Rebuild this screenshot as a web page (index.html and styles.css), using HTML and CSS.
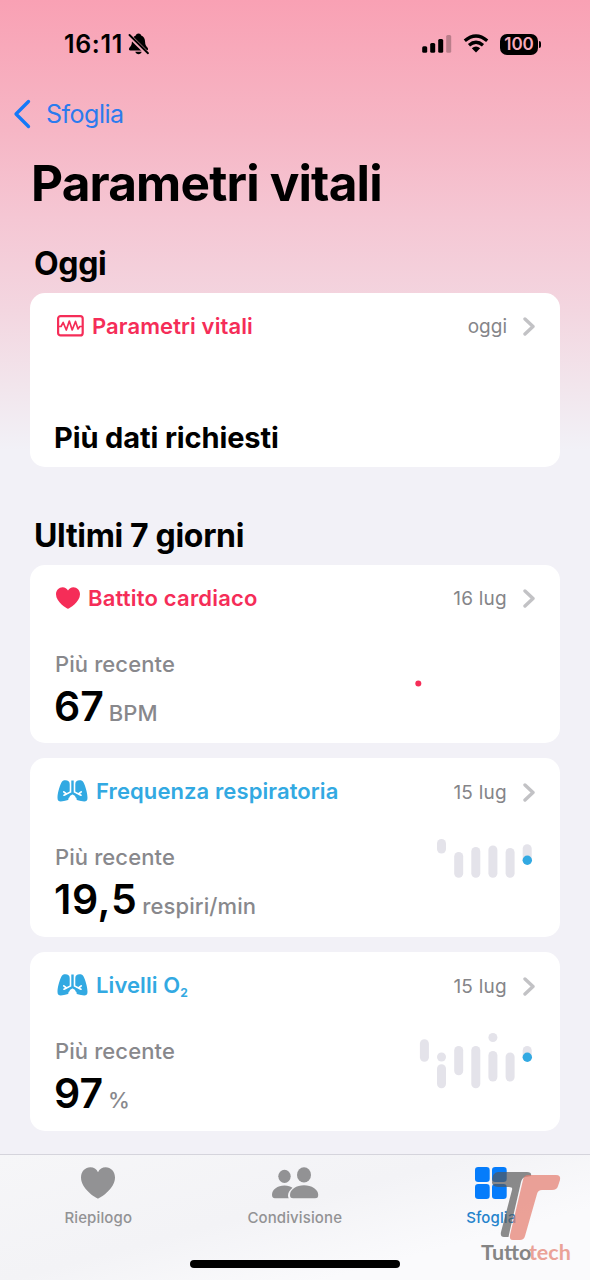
FILE: index.html
```html
<!DOCTYPE html>
<html lang="it">
<head>
<meta charset="utf-8">
<title>Parametri vitali</title>
<link rel="stylesheet" href="styles.css">
</head>
<body>
<svg class="defs" width="0" height="0">
  <symbol id="heart" viewBox="0 0 34 32"><path d="M17 31.500C15.500 31.500 0 22 0 10.500C0 4.500 4.300 0.300 9.300 0.300C12.800 0.300 15.500 2.200 17 5.200C18.500 2.200 21.200 0.300 24.700 0.300C29.700 0.300 34 4.500 34 10.500C34 22 18.500 31.500 17 31.500Z"/></symbol>
  <symbol id="chevron" viewBox="0 0 12 19"><path d="M2 2L10 9.500L2 17" fill="none" stroke="currentColor" stroke-width="3.400" stroke-linecap="round" stroke-linejoin="round"/></symbol>
  <symbol id="lungs" viewBox="0 0 31 22">
    <path d="M8.500 0.300C11 0.300 12.700 1.500 12.700 4V17C12.700 20 10 20.500 7 21C3.500 21.600 0.500 22 0.500 18C0.500 13 2.500 6.500 4.300 2.700C5.200 0.900 6.500 0.300 8.500 0.300Z"/>
    <path d="M22.500 0.300C20 0.300 18.300 1.500 18.300 4V17C18.300 20 21 20.500 24 21C27.500 21.600 30.500 22 30.500 18C30.500 13 28.500 6.500 26.700 2.700C25.800 0.900 24.500 0.300 22.500 0.300Z"/>
    <path d="M15.500 15.500L11.500 18V22H19.500V18Z" fill="#fff"/>
    <path d="M13.200 12.300L7 15.200M9.500 14L6.800 11.800M17.800 12.300L24 15.200M21.500 14L24.200 11.800" fill="none" stroke="#fff" stroke-width="1.700" stroke-linecap="round"/>
    <path d="M15.500 0.500V13.500M15.500 13L11 15.800M15.500 13L20 15.800" fill="none" stroke="currentColor" stroke-width="2.400"/>
  </symbol>
</svg>
<main class="screen">
  <header class="status">
    <div class="clock"><span class="time">16:11</span>
      <svg class="bell" width="22" height="22" viewBox="0 0 22 22"><path d="M10.500 0.500C12.300 0.500 13 1.700 13.200 2.500C16 3.500 17 6 17.100 9C17.200 12 18 13 19.600 14.800C20.500 16 20.200 17.500 18.500 17.500H2.500C0.800 17.500 0.500 16 1.400 14.800C3 13 3.800 12 3.900 9C4 6 5 3.500 7.800 2.500C8 1.700 8.700 0.500 10.500 0.500ZM7.300 18.800H13.700C13 22 8 22 7.300 18.800Z"/><path d="M0.500 2L20 21.200" stroke="#f7aabb" stroke-width="4.400"/><path d="M1.500 2L20 20.200" stroke="#000" stroke-width="1.900" stroke-linecap="round"/></svg>
    </div>
    <div class="indicators">
      <svg width="30" height="20" viewBox="0 0 30 20"><rect x="0.200" y="12.300" width="5" height="6.500" rx="1.500"/><rect x="8.200" y="9" width="5" height="9.800" rx="1.500"/><rect x="16.200" y="5" width="5" height="13.800" rx="1.500"/><rect x="24.200" y="1" width="5" height="17.800" rx="1.500" opacity=".25"/></svg>
      <svg class="wifi" width="26" height="20" viewBox="0 0 26 20"><path d="M1.800 6.800Q13 -2.800 24.200 6.800M6 11.200Q13 5.200 20 11.200" fill="none" stroke="#000" stroke-width="3.300"/><path d="M8.800 14.200Q13 10.800 17.200 14.200L13 18.600Z"/></svg>
      <span class="battery">100</span><span class="battery-cap"></span>
    </div>
  </header>
  <nav class="back"><svg width="18" height="30" viewBox="0 0 18 30"><path d="M15.500 2.500L3 15L15.500 27.500" fill="none" stroke="#1479f8" stroke-width="3.300" stroke-linecap="round" stroke-linejoin="round"/></svg><span class="back-label">Sfoglia</span></nav>
  <h1 class="title">Parametri vitali</h1>
  <h2 class="heading today">Oggi</h2>
  <section class="card card-short">
    <div class="card-head"><svg class="red" width="27" height="22" viewBox="0 0 27 22"><rect x="1.100" y="1.100" width="24.600" height="19.300" rx="2.500" fill="none" stroke="currentColor" stroke-width="2.200"/><path d="M2 11.500H4L6.200 7.500L9.300 15L12.300 6L15.200 15L18.500 6.500L21 14L22.800 11.500H25" fill="none" stroke="currentColor" stroke-width="1.700" stroke-linejoin="round"/></svg><span class="label red l-vital">Parametri vitali</span><span class="date">oggi</span><svg class="chev" width="12" height="19"><use href="#chevron"/></svg></div>
    <p class="message">Più dati richiesti</p>
  </section>
  <h2 class="heading week">Ultimi 7 giorni</h2>
  <div class="cards">
    <section class="card">
      <div class="card-head"><svg class="red heart" width="24" height="22" viewBox="0 0 34 32" preserveAspectRatio="none"><use href="#heart" width="34" height="32"/></svg><span class="label red l-heart">Battito cardiaco</span><span class="date dated">16 lug</span><svg class="chev" width="12" height="19"><use href="#chevron"/></svg></div>
      <div class="card-body"><div><p class="recent">Più recente</p><p class="reading"><span class="value">67</span><span class="unit u-bpm">BPM</span></p></div>
      <svg class="chart" width="120" height="84"><circle class="dot-red" cx="3.300" cy="50.500" r="3"/></svg></div>
    </section>
    <section class="card">
      <div class="card-head"><svg class="blue" width="31" height="22"><use href="#lungs"/></svg><span class="label blue l-resp">Frequenza respiratoria</span><span class="date dated">15 lug</span><svg class="chev" width="12" height="19"><use href="#chevron"/></svg></div>
      <div class="card-body"><div><p class="recent">Più recente</p><p class="reading"><span class="value v-resp">19,5</span><span class="unit u-resp">respiri/min</span></p></div>
      <svg class="chart" width="120" height="84"><rect x="22" y="13" width="9" height="14.500" rx="4.500"/><rect x="39.200" y="26" width="9" height="25.700" rx="4.500"/><rect x="56.300" y="21" width="9" height="30.700" rx="4.500"/><rect x="73.400" y="19.500" width="9" height="32.200" rx="4.500"/><rect x="90.600" y="22" width="9" height="29.700" rx="4.500"/><rect x="107.700" y="18.300" width="9" height="20" rx="4.500"/><circle class="dot-blue" cx="112.300" cy="34.200" r="4.700"/></svg></div>
    </section>
    <section class="card">
      <div class="card-head"><svg class="blue" width="31" height="22"><use href="#lungs"/></svg><span class="label blue l-oxy">Livelli O<span class="two">2</span></span><span class="date dated">15 lug</span><svg class="chev" width="12" height="19"><use href="#chevron"/></svg></div>
      <div class="card-body"><div><p class="recent">Più recente</p><p class="reading"><span class="value">97</span><span class="unit u-pct">%</span></p></div>
      <svg class="chart" width="120" height="84"><rect x="4.900" y="19.300" width="9" height="22.500" rx="4.500"/><rect x="22" y="32.500" width="9" height="9" rx="4.500"/><rect x="22" y="44.300" width="9" height="24" rx="4.500"/><rect x="39.200" y="26" width="9" height="29.300" rx="4.500"/><rect x="56.300" y="26" width="9" height="42.300" rx="4.500"/><rect x="73.400" y="13" width="9" height="9" rx="4.500"/><rect x="73.400" y="31" width="9" height="30.500" rx="4.500"/><rect x="90.600" y="32.500" width="9" height="29" rx="4.500"/><rect x="107.700" y="26" width="9" height="15" rx="4.500"/><circle class="dot-blue" cx="112.300" cy="37.300" r="4.700"/></svg></div>
    </section>
  </div>
  <footer class="tabbar">
    <div class="tab"><svg width="34" height="32"><use href="#heart"/></svg><span class="t-rie">Riepilogo</span></div>
    <div class="tab"><svg width="48" height="32" viewBox="0 0 48 32"><ellipse cx="13.500" cy="9.300" rx="6.200" ry="6.600"/><ellipse cx="33" cy="7.900" rx="7" ry="7.700"/><path d="M1 27.500C1 22.500 6.500 18.500 13.500 18.500C17 18.500 20 19.500 21.500 20.800C18.500 23.300 17 26 17 28.500C17 29.800 17.300 30.500 17.800 31.300H4C1.800 31.300 1 30 1 27.500Z"/><path d="M19 27.800C19 22.500 25.500 18.300 33 18.300C40.500 18.300 47.200 22.500 47.200 27.800C47.200 30.300 46.500 31.300 44 31.300H22.200C19.700 31.300 19 30.300 19 27.800Z"/></svg><span class="t-con">Condivisione</span></div>
    <div class="tab active"><svg width="32" height="32"><rect width="14.700" height="15" rx="3.200"/><rect x="17" width="14.700" height="15" rx="3.200"/><rect y="17" width="14.700" height="15" rx="3.200"/><rect x="17" y="17" width="14.700" height="15" rx="3.200"/></svg><span class="t-sfo">Sfoglia</span></div>
    <div class="home-bar"></div>
  </footer>
  <div class="watermark">
    <svg width="74" height="72" viewBox="0 0 74 72"><path d="M8 2H37Q42 2 41 6L35 7Q32 8 31 12L20 60L18.500 67H14Q10 67 11 62L22 20Q23 17 19 17H9Q3 17 2 13Q2 2 8 2Z" fill="#555" opacity=".68"/><path d="M38 5H66Q71 5 70 10L68 16Q67 20 62 20H52Q48 20 47 24L35 66Q34 70 30 70H23Q19 70 20 65L33 10Q34 5 38 5Z" fill="#e47e70" opacity=".72"/></svg>
    <div class="brand"><span>Tutto</span><span class="brand-tech">tech</span></div>
  </div>
</main>
</body>
</html>
```
FILE: styles.css
```css
* { box-sizing: border-box; }
body { margin: 0; font-family: Inter, "Liberation Sans", sans-serif; color: #000; }
h1, h2, p { margin: 0; }
svg { fill: currentColor; flex: none; display: block; }
.defs { position: absolute; }
.screen { position: relative; width: 590px; height: 1280px; overflow: hidden; display: flex; flex-direction: column; background: linear-gradient(#f9a1b4 0, #f6b6c5 130px, #f5c7d4 220px, #f3d6e0 310px, #f2e5ec 385px, #f2f1f7 450px) #f2f1f7; white-space: nowrap; }
.status { height: 88px; flex: none; display: flex; justify-content: space-between; align-items: center; padding: 0 49px 0 64px; }
.clock, .indicators { display: flex; align-items: center; }
.time { font-size: 25px; font-weight: 600; letter-spacing: .65px; }
.bell { margin-left: 5px; }
.wifi { margin: 0 11px 0 11px; }
.battery { width: 38px; height: 21px; border-radius: 7px; background: #000; color: #f7aabb; font-size: 17px; line-height: 21px; font-weight: 600; text-align: center; }
.battery-cap { width: 2px; height: 7px; margin-left: 1px; border-radius: 0 2px 2px 0; background: #000; }
.back { height: 52px; flex: none; display: flex; align-items: center; padding-left: 13px; color: #2b7bee; }
.back-label { font-size: 25px; margin-left: 15px; letter-spacing: -.5px; }
.title { height: 86px; line-height: 86px; font-size: 49.500px; font-weight: 700; padding-left: 31px; letter-spacing: -.82px; flex: none; }
.heading { font-size: 32px; font-weight: 700; line-height: 59px; padding-left: 34px; letter-spacing: -.33px; flex: none; }
.today { margin: 7px 0 0; height: 59.500px; line-height: 61px; }
.week { margin-top: 39px; height: 59px; }
.card { width: 530px; height: 178.500px; margin-left: 30px; border-radius: 15px; background: #fff; padding: 16px 25px 0; flex: none; }
.card-short { height: 174px; }
.cards { display: flex; flex-direction: column; gap: 15.300px; }
.card-head { height: 34px; display: flex; align-items: center; padding-left: 2px; }
.heart { margin-left: -1px; }
.label { font-size: 22px; font-weight: 600; margin-left: 8px; letter-spacing: .1px; }
.l-heart { letter-spacing: .2px; }
.red { color: #f52d58; }
.blue { color: #32a9e2; }
.date { margin-left: auto; font-size: 19px; color: #858589; padding-top: 2px; }
.dated { letter-spacing: .25px; }
.chev { margin: 2px 0 0 16px; color: #c2c2c5; }
.message { font-size: 29px; font-weight: 700; line-height: 40px; margin: 75px 0 0 -1px; letter-spacing: -.12px; }
.two { font-size: 12px; font-weight: 700; position: relative; top: 4px; }
.card-body { display: flex; justify-content: space-between; }
.recent { font-size: 22px; font-weight: 500; line-height: 28px; color: #88888c; margin-top: 35px; letter-spacing: .1px; }
.reading { line-height: 56px; margin-left: -1px; }
.value { font-size: 41px; font-weight: 600; }
.v-resp { letter-spacing: .6px; }
.unit { font-size: 22px; font-weight: 500; color: #88888c; margin-left: 5px; }
.u-resp { letter-spacing: .1px; }
.chart { margin-top: 18px; fill: #e4e3ea; }
.dot-red { fill: #f52d58; }
.dot-blue { fill: #32a9e2; }
.tabbar { margin-top: auto; height: 126px; flex: none; display: grid; grid-template-columns: repeat(3, 196.500px); border-top: 1px solid #d5d4dc; background: linear-gradient(165deg, #f6f6f8, #f3f3f6 45%, #fafafc 75%); position: relative; }
.tab { display: flex; flex-direction: column; align-items: center; padding-top: 12px; color: #929294; font-size: 15px; font-weight: 500; }
.tab span { margin-top: 9px; letter-spacing: .12px; }
.active { color: #057cfb; }
.active span { color: #2583cc; }
.home-bar { position: absolute; left: 190px; bottom: 12px; width: 210px; height: 8px; border-radius: 4px; background: #000; }
.watermark { position: absolute; left: 480px; top: 1170px; width: 92px; height: 96px; }
.watermark svg { margin-left: 10px; }
.brand { position: absolute; left: 1px; top: 70px; font: 700 21.500px/24px Lato, sans-serif; color: #858585; }
.brand-tech { color: #eaa297; margin-left: -2.500px; }
```
